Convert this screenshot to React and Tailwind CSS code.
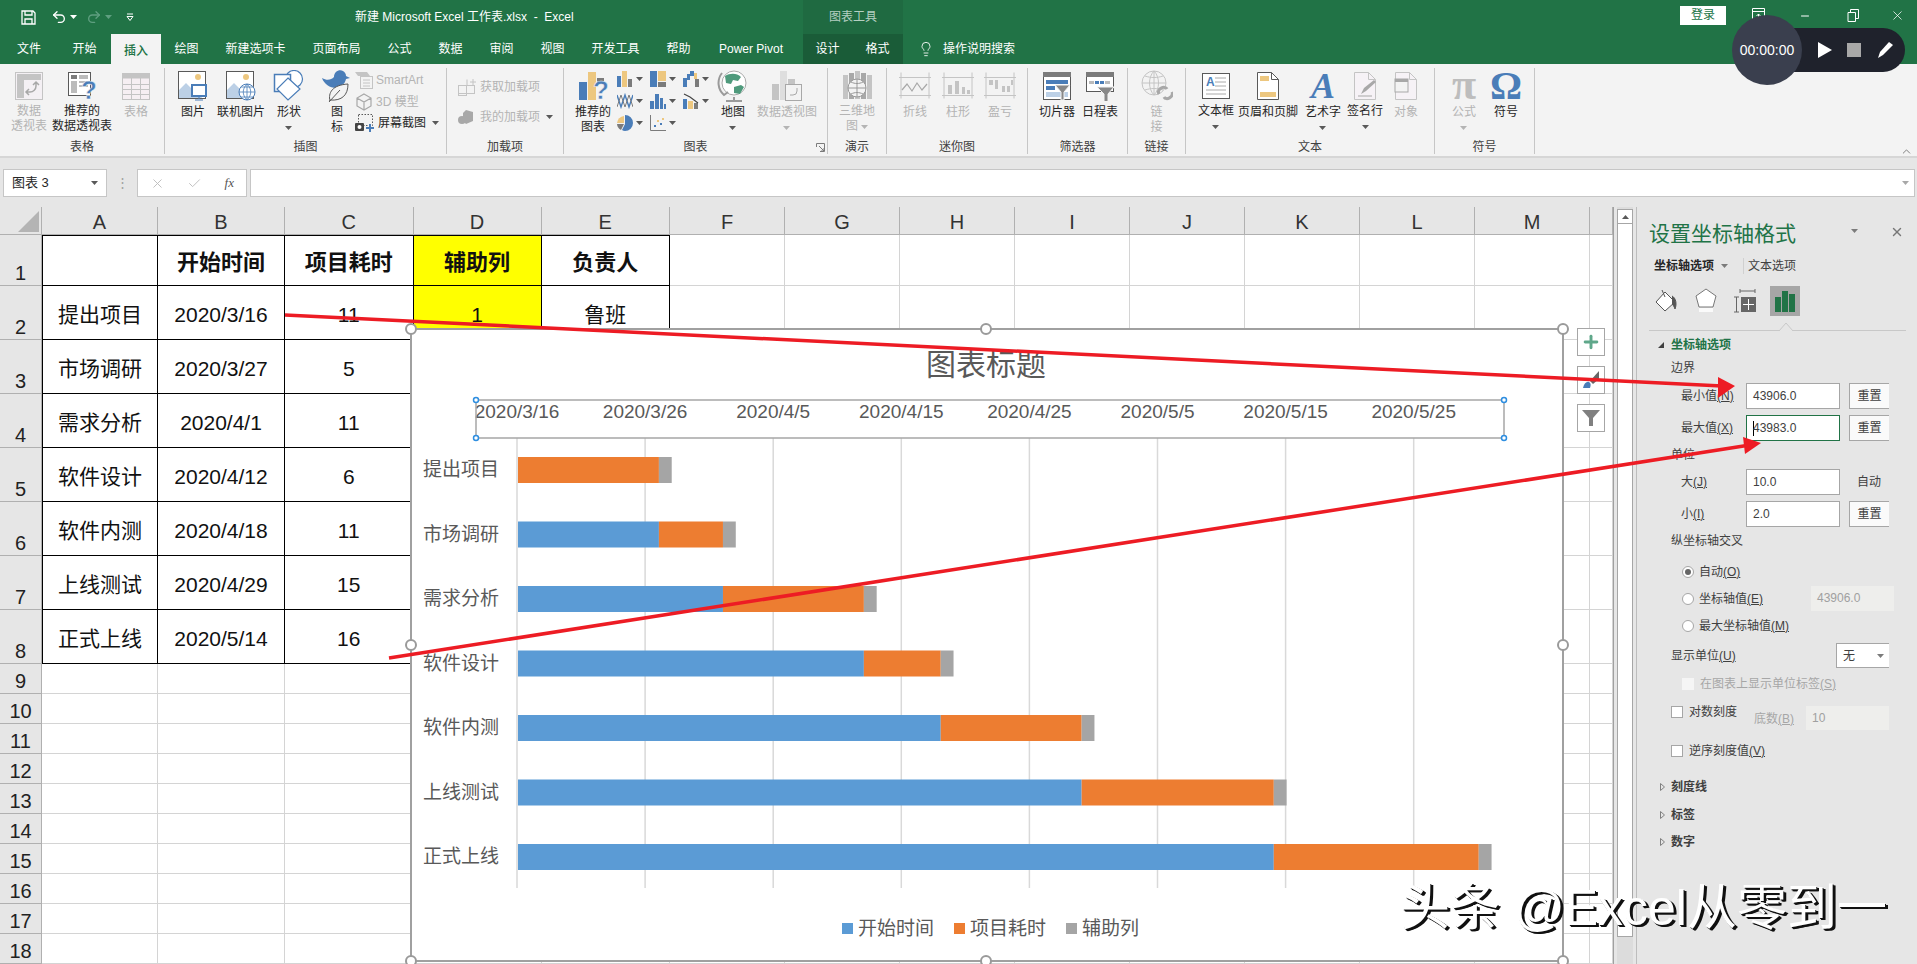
import { Undo2, Redo2, Lightbulb, X, Check, Plus, Minus, ChevronUp } from "lucide-react";

const B = "#4a7db8";
const T = "#edc77f";
const G = "#7b7b7b";
const D = "#c4c4c4";
const DD = "#a8a8a8";
const INK = "#595959";

const Ic = ({ w = 32, h = 32, children }) => (
  <svg width={w} height={h} viewBox={`0 0 ${w} ${h}`} className="block shrink-0">
    {children}
  </svg>
);

const Caret = ({ c = "#595959" }) => (
  <svg width="7" height="4" viewBox="0 0 7 4" className="block shrink-0">
    <polygon points="0,0 7,0 3.5,4" fill={c} />
  </svg>
);

const Question = ({ className }) => (
  <span className={`absolute text-[26px] leading-[26px] font-bold text-[#4a7db8] [-webkit-text-stroke:0.5px_#f3f3f3] ${className}`}>?</span>
);

/* ribbon icons */
const PivotIcon = () => (
  <Ic w={30} h={30}>
    <rect x="1.5" y="1.5" width="27" height="27" fill="#f4f0f4" stroke={D} />
    <rect x="3" y="3" width="24" height="6" fill={D} />
    <rect x="3" y="3" width="7" height="24" fill={D} />
    <path d="M22 12v3a6 6 0 0 1-6 6h-3M19 14l3-3 3 3M15 18l-3 3 3 3" fill="none" stroke={DD} strokeWidth="1.5" />
  </Ic>
);
const RecPivotIcon = () => (
  <div className="relative w-[30px] h-[30px]">
    <Ic w={30} h={30}>
      <rect x="1.5" y="1.5" width="22" height="23" fill="#fff" stroke={INK} />
      <rect x="4" y="4" width="6" height="4" fill={G} />
      <rect x="4" y="10" width="6" height="12" fill="#bbb" />
      <rect x="12" y="4" width="9" height="4" fill="#bbb" />
      <rect x="12" y="10" width="9" height="2" fill="#bbb" />
      <rect x="12" y="14" width="9" height="2" fill="#bbb" />
    </Ic>
    <Question className="left-[14px] top-[6px]" />
  </div>
);
const TableIcon = () => (
  <Ic w={30} h={30}>
    <rect x="1.5" y="2.5" width="27" height="26" fill="#f6eff3" stroke={D} />
    <rect x="1.5" y="2.5" width="27" height="5" fill={D} />
    <path d="M10.5 3v25M19.5 3v25M2 13.5h26M2 18.5h26M2 23.5h26" stroke={D} />
  </Ic>
);
const PictureIcon = ({ children }) => (
  <Ic w={32} h={32}>
    <rect x="1.5" y="1.5" width="27" height="27" fill="#fff" stroke={INK} />
    <circle cx="21" cy="7" r="3" fill={T} />
    <polygon points="2,28 2,20 9,13 15,19 18,17 25,28" fill="#bcd0e6" />
    {children}
  </Ic>
);
const ShapesIcon = () => (
  <Ic w={32} h={32}>
    <circle cx="21" cy="9" r="8.5" fill="#fff" stroke={B} strokeWidth="1.2" />
    <rect x="1.5" y="4.5" width="16" height="17" fill="#fff" stroke={B} strokeWidth="1.5" />
    <polygon points="15,8 27,19 15,30 4,19" fill="#fff" stroke={B} strokeWidth="1.2" />
  </Ic>
);
const BirdIcon = () => (
  <Ic w={32} h={32}>
    <path fill={B} d="M1 8C6 11 10 10 13 7C13 2 18 -1 22 1C24 2 25 4 25 6L29 8L25 9C24 14 20 17 15 18C9 18 3 14 1 8Z" />
    <path fill="#f3f3f3" stroke={INK} d="M9 31C7 23 11 15 27 14C27 25 21 31 9 30ZM8 32L19 20" />
  </Ic>
);
const SmartArtIcon = () => (
  <Ic w={18} h={18}>
    <polygon points="0,1 12,1 15,5 3,5" fill={D} />
    <rect x="5.5" y="5.5" width="12" height="12" fill="none" stroke={D} />
    <path d="M8 9h7M8 12h7M8 15h7" stroke={D} />
  </Ic>
);
const CubeIcon = () => (
  <Ic w={18} h={18}>
    <path d="M9 1l7 4v8l-7 4-7-4V5zM2 5l7 4 7-4M9 9v8" fill="none" stroke={DD} strokeWidth="1.2" />
  </Ic>
);
const ShotIcon = () => (
  <Ic w={20} h={20}>
    <rect x="3.5" y="1.5" width="14" height="11" fill="none" stroke={INK} strokeDasharray="1.5 1.5" />
    <rect x="0" y="10" width="9" height="8" rx="1" fill="#444" />
    <circle cx="4.5" cy="14" r="2" fill="#fff" />
    <path d="M15 11v8M11 15h8" stroke={B} strokeWidth="2" />
  </Ic>
);
const StoreIcon = () => (
  <Ic w={20} h={18}>
    <rect x="1.5" y="7.5" width="8" height="8" fill="none" stroke={D} />
    <rect x="9.5" y="7.5" width="8" height="8" fill="none" stroke={D} />
    <rect x="1.5" y="15.5" width="8" height="2" fill="none" stroke={D} />
    <rect x="9.5" y="1.5" width="1" height="6" fill={D} />
    <path d="M13 4h6M16 1v6" stroke={D} />
  </Ic>
);
const MyAddIcon = () => (
  <Ic w={20} h={18}>
    <polygon points="9,2 16,4 16,13 9,16 6,13 6,5" fill={DD} />
    <circle cx="5" cy="12" r="4" fill={DD} />
  </Ic>
);
const RecChartIcon = () => (
  <div className="relative w-[32px] h-[32px]">
    <Ic w={32} h={32}>
      <rect x="2" y="12" width="8" height="18" fill={B} />
      <rect x="11" y="2" width="8" height="28" fill={T} />
      <rect x="20" y="8" width="7" height="5" fill={G} />
    </Ic>
    <Question className="left-[16px] top-[7px]" />
  </div>
);
const Col1 = () => (
  <Ic w={16} h={16}>
    <rect x="0" y="5" width="4" height="11" fill={B} />
    <rect x="5" y="0" width="5" height="16" fill={T} />
    <rect x="11" y="8" width="4" height="8" fill={G} />
  </Ic>
);
const Tree = () => (
  <Ic w={16} h={16}>
    <rect x="0" y="0" width="7" height="16" fill={B} />
    <rect x="8" y="0" width="8" height="10" fill={T} />
    <rect x="8" y="11" width="8" height="5" fill={G} />
  </Ic>
);
const Fall = () => (
  <Ic w={16} h={16}>
    <rect x="0" y="7" width="4" height="9" fill={B} />
    <rect x="4" y="3" width="3" height="6" fill={B} />
    <rect x="7" y="0" width="4" height="5" fill={B} />
    <rect x="11" y="2" width="3" height="6" fill={T} />
    <rect x="12" y="8" width="4" height="8" fill={G} />
  </Ic>
);
const Lines = () => (
  <Ic w={16} h={16}>
    <path d="M0 2l4 12 4-12 4 12 4-12" fill="none" stroke={B} strokeWidth="1.4" />
    <path d="M0 14l4-12 4 12 4-12 4 12" fill="none" stroke={G} strokeWidth="1" />
  </Ic>
);
const Hist = () => (
  <Ic w={16} h={16}>
    <rect x="0" y="8" width="4" height="8" fill={B} />
    <rect x="5" y="1" width="4" height="15" fill={B} />
    <rect x="10" y="5" width="3" height="11" fill={B} />
    <rect x="14" y="11" width="2" height="5" fill={B} />
  </Ic>
);
const Combo = () => (
  <Ic w={16} h={16}>
    <rect x="0" y="6" width="4" height="10" fill={B} />
    <rect x="5" y="8" width="5" height="8" fill={T} />
    <rect x="11" y="10" width="4" height="6" fill={G} />
    <path d="M1 1l6 3 8 6" fill="none" stroke="#444" strokeWidth="1.2" />
  </Ic>
);
const Pie = () => (
  <Ic w={16} h={16}>
    <path d="M7 1a7.5 7.5 0 0 0-7 7h7z" fill={T} />
    <path d="M0 9a7.5 7.5 0 0 0 4 6l3-6z" fill={G} />
    <path d="M8 0a8 8 0 0 1 0 16 8 8 0 0 1-3-1l3-6z" fill={B} />
  </Ic>
);
const Scatter = () => (
  <Ic w={16} h={16}>
    <path d="M.5 0v15.5H16" fill="none" stroke={G} />
    <rect x="4" y="10" width="2" height="2" fill={B} />
    <rect x="7" y="5" width="2" height="2" fill={T} />
    <rect x="10" y="8" width="2" height="2" fill={B} />
    <rect x="12" y="3" width="2" height="2" fill={T} />
  </Ic>
);
const GlobeIcon = () => (
  <Ic w={32} h={34}>
    <circle cx="17" cy="14" r="12" fill="#fff" stroke="#aaa" />
    <path d="M8 7c5-3 12-3 16 1l-3 4-5-1-2 4-5-1zM17 18l7-2 3 2-4 7-6-1z" fill="#4f9a7c" />
    <path d="M5 4a16 16 0 0 0 2 22l4-3M17 28v3M9 32h16" fill="none" stroke="#9a9a9a" strokeWidth="2" />
  </Ic>
);
const PivotChartIcon = () => (
  <Ic w={32} h={32}>
    <rect x="1" y="14" width="7" height="16" fill={D} />
    <rect x="9" y="1" width="7" height="29" fill="#dedede" />
    <rect x="17" y="9" width="7" height="21" fill={D} />
    <rect x="14.5" y="14.5" width="16" height="16" fill="#f3f3f3" stroke={DD} />
    <path d="M26 18v3a4 4 0 0 1-4 4h-3" fill="none" stroke={DD} />
  </Ic>
);
const MapIcon = () => (
  <Ic w={32} h={30}>
    <rect x="2" y="4" width="5" height="24" fill={D} />
    <rect x="8" y="2" width="5" height="26" fill={DD} />
    <rect x="14" y="0" width="5" height="28" fill={D} />
    <rect x="20" y="2" width="5" height="26" fill={DD} />
    <rect x="26" y="4" width="5" height="24" fill={D} />
    <circle cx="16" cy="17" r="9" fill="#f3f3f3" stroke="#999" />
    <path d="M7 17h18M16 8v18M10 11c4 2 8 2 12 0M10 23c4-2 8-2 12 0" fill="none" stroke="#999" />
  </Ic>
);
const Spark = ({ children }) => (
  <Ic w={32} h={28}>
    <path d="M2 .5v26M30 .5v26M0 5.5h32M0 23.5h32" stroke={D} />
    {children}
  </Ic>
);
const SlicerIcon = () => (
  <Ic w={30} h={30}>
    <rect x="1.5" y="1.5" width="27" height="27" fill="#fff" stroke={INK} />
    <rect x="1" y="1" width="28" height="5" fill={G} />
    <rect x="4" y="9" width="22" height="4" fill={B} />
    <rect x="4" y="15" width="9" height="4" fill={B} />
    <rect x="4" y="21" width="22" height="5" fill="#bcd0e6" />
    <polygon points="13,14 28,14 22,21 22,29 19,29 19,21" fill="#888" stroke="#f3f3f3" />
  </Ic>
);
const TimelineIcon = () => (
  <Ic w={30} h={30}>
    <rect x="1.5" y="1.5" width="27" height="19" fill="#fff" stroke={INK} />
    <rect x="1" y="1" width="28" height="5" fill={G} />
    <rect x="4" y="10" width="5" height="3" fill="#bbb" />
    <rect x="10" y="10" width="4" height="3" fill={B} />
    <rect x="15" y="10" width="4" height="3" fill={B} />
    <rect x="20" y="10" width="5" height="3" fill="#bbb" />
    <polygon points="12,16 29,16 23,23 23,32 19,32 19,23" fill="#888" stroke="#f3f3f3" />
  </Ic>
);
const LinkIcon = () => (
  <Ic w={32} h={32}>
    <circle cx="13" cy="13" r="12" fill="#f3f3f3" stroke={D} />
    <path d="M1 13h24M13 1v24M4 6c6 2 12 2 18 0M4 20c6-2 12-2 18 0M13 1c-6 6-6 18 0 24M13 1c6 6 6 18 0 24" fill="none" stroke={D} />
    <path d="M18 24c-3-5 6-9 8-5M31 22c2 5-6 9-8 5" fill="none" stroke={DD} strokeWidth="3" />
  </Ic>
);
const TextBoxIcon = () => (
  <div className="relative w-[30px] h-[30px]">
    <Ic w={30} h={30}>
      <rect x="1.5" y="2.5" width="27" height="25" fill="#fff" stroke={INK} />
      <path d="M14 7h11M14 11h11M14 15h11M5 19h20M5 23h20" stroke="#aaa" />
    </Ic>
    <span className="absolute left-[5px] top-[5px] text-[12px] leading-[12px] font-bold text-[#4a7db8]">A</span>
  </div>
);
const PageIcon = ({ stroke = INK, fill = "#fff", children }) => (
  <Ic w={24} h={30}>
    <path d="M1.5 1.5h14l7 7v20h-21z" fill={fill} stroke={stroke} />
    <path d="M15.5 1.5v7h7" fill="none" stroke={stroke} />
    {children}
  </Ic>
);
const WordArtIcon = () => (
  <div className="w-[30px] h-[32px] text-center text-[36px] leading-[32px] font-bold italic text-[#4a7db8] [font-family:'Liberation_Serif',serif]">A</div>
);
const PiIcon = () => (
  <div className="w-[32px] h-[32px] text-center text-[44px] leading-[30px] font-bold text-[#bdbdbd] [font-family:'Liberation_Serif',serif]">π</div>
);
const OmegaIcon = () => (
  <div className="w-[32px] h-[32px] text-center text-[40px] leading-[32px] font-bold text-[#4a7db8] [font-family:'Liberation_Serif',serif]">Ω</div>
);

/* ribbon parts */
const Big = ({ w, icon, lines, caret, off }) => (
  <div className={`${w} shrink-0 flex flex-col items-center whitespace-nowrap`}>
    <div className="h-[32px] mt-[2px] flex items-center justify-center">{icon}</div>
    <div className={`mt-[3px] text-[12px] leading-[15px] flex flex-col items-center ${off ? "text-[#b4b4b4]" : "text-[#262626]"}`}>
      {lines.map((l, i) => (
        <span key={i} className="flex items-center gap-[3px] h-[15px]">
          {l}
          {caret === "inline" && i === lines.length - 1 && <Caret c="#b4b4b4" />}
        </span>
      ))}
      {caret === true && (
        <span className="h-[15px] flex items-center">
          <Caret c={off ? "#b4b4b4" : "#595959"} />
        </span>
      )}
    </div>
  </div>
);

const SmallRow = ({ icon, label, caret, off }) => (
  <div className={`h-[22px] flex items-center gap-[3px] text-[12px] whitespace-nowrap ${off ? "text-[#b4b4b4]" : "text-[#262626]"}`}>
    {icon}
    {label}
    {caret && <span className="ml-[3px]"><Caret /></span>}
  </div>
);

const Group = ({ w, label, children, launcher }) => (
  <div className={`${w} shrink-0 h-[86px] mt-[4px] border-r border-[#c6c6c6] flex flex-col relative`}>
    <div className="h-[66px] flex">{children}</div>
    <div className="mt-[7px] h-[13px] leading-[13px] text-center text-[12px] text-[#404040]">{label}</div>
    {launcher && (
      <svg width="9" height="9" viewBox="0 0 9 9" className="absolute right-[2px] bottom-[2px]">
        <path d="M.5 4V.5H8.5V8.5H4M3 3l5 5M5 8h3V5" fill="none" stroke="#7b7b7b" />
      </svg>
    )}
  </div>
);

const ChartCell = ({ icon }) => (
  <div className="h-[22px] w-[33px] flex items-center gap-[3px]">
    {icon}
    <Caret />
  </div>
);

const Ribbon = () => (
  <div className="relative h-[94px] bg-[#f3f3f3] border-b-2 border-[#d6d6d6] flex shrink-0">
    <Group w="w-[165px]" label="表格">
      <div className="w-[4px] shrink-0" />
      <Big w="w-[50px]" icon={<PivotIcon />} lines={["数据", "透视表"]} off />
      <Big w="w-[56px]" icon={<RecPivotIcon />} lines={["推荐的", "数据透视表"]} />
      <Big w="w-[52px]" icon={<TableIcon />} lines={["表格"]} off />
    </Group>
    <Group w="w-[282px]" label="插图">
      <Big w="w-[56px]" icon={<PictureIcon><rect x="15" y="15" width="14" height="11" fill="#fff" stroke={B} strokeWidth="2" /><path d="M22 26v3M18 30h8" stroke={B} /></PictureIcon>} lines={["图片"]} />
      <Big w="w-[40px]" icon={<PictureIcon><circle cx="22" cy="22" r="8" fill="#fff" stroke={B} /><path d="M14 22h16M22 14v16M16 17h12M16 27h12M22 14c-5 5-5 11 0 16M22 14c5 5 5 11 0 16" fill="none" stroke={B} strokeWidth=".8" /></PictureIcon>} lines={["联机图片"]} />
      <Big w="w-[56px]" icon={<ShapesIcon />} lines={["形状"]} caret />
      <Big w="w-[40px]" icon={<BirdIcon />} lines={["图", "标"]} />
      <div className="ml-[-2px] pt-[1px] flex flex-col">
        <SmallRow icon={<SmartArtIcon />} label="SmartArt" off />
        <SmallRow icon={<CubeIcon />} label="3D 模型" off />
        <SmallRow icon={<ShotIcon />} label="屏幕截图" caret />
      </div>
    </Group>
    <Group w="w-[117px]" label="加载项">
      <div className="pl-[10px] pt-[8px] flex flex-col gap-[8px]">
        <SmallRow icon={<StoreIcon />} label="获取加载项" off />
        <SmallRow icon={<MyAddIcon />} label="我的加载项" off caret />
      </div>
    </Group>
    <Group w="w-[264px]" label="图表" launcher>
      <div className="w-[5px] shrink-0" />
      <Big w="w-[48px]" icon={<RecChartIcon />} lines={["推荐的", "图表"]} />
      <div className="w-[99px] shrink-0 flex flex-wrap content-start">
        <ChartCell icon={<Col1 />} />
        <ChartCell icon={<Tree />} />
        <ChartCell icon={<Fall />} />
        <ChartCell icon={<Lines />} />
        <ChartCell icon={<Hist />} />
        <ChartCell icon={<Combo />} />
        <ChartCell icon={<Pie />} />
        <ChartCell icon={<Scatter />} />
      </div>
      <Big w="w-[34px]" icon={<GlobeIcon />} lines={["地图"]} caret />
      <Big w="w-[74px]" icon={<PivotChartIcon />} lines={["数据透视图"]} caret off />
    </Group>
    <Group w="w-[59px]" label="演示">
      <Big w="w-[58px]" icon={<MapIcon />} lines={["三维地", "图"]} caret="inline" off />
    </Group>
    <Group w="w-[141px]" label="迷你图">
      <Big w="w-[56px]" icon={<Spark><path d="M3 18l5-6 5 7 5-8 5 7 5-6" fill="none" stroke={DD} strokeWidth="1.2" /></Spark>} lines={["折线"]} off />
      <Big w="w-[30px]" icon={<Spark><path d="M6 22V13h4v9zM13 22V9h4v13zM20 22v-7h3v7zM25 22v-4h3v4z" fill={D} /></Spark>} lines={["柱形"]} off />
      <Big w="w-[54px]" icon={<Spark><path d="M5 8h4v5H5zM11 8h3v9h-3zM18 14h3v6h-3zM23 14h3v6h-3zM27 8h2v5h-2z" fill={D} /></Spark>} lines={["盈亏"]} off />
    </Group>
    <Group w="w-[100px]" label="筛选器">
      <Big w="w-[58px]" icon={<SlicerIcon />} lines={["切片器"]} />
      <Big w="w-[28px]" icon={<TimelineIcon />} lines={["日程表"]} />
    </Group>
    <Group w="w-[58px]" label="链接">
      <Big w="w-[57px]" icon={<LinkIcon />} lines={["链", "接"]} off />
    </Group>
    <Group w="w-[249px]" label="文本">
      <Big w="w-[60px]" icon={<TextBoxIcon />} lines={["文本框"]} caret />
      <Big w="w-[44px]" icon={<PageIcon><rect x="4" y="5" width="9" height="5" fill={T} /><rect x="4" y="21" width="16" height="5" fill={T} /></PageIcon>} lines={["页眉和页脚"]} />
      <Big w="w-[66px]" icon={<WordArtIcon />} lines={["艺术字"]} caret />
      <Big w="w-[18px]" icon={<PageIcon stroke={D} fill="#f6f2f6"><path d="M5 25h14" stroke={DD} /><path d="M8 23l3-6 10-8 2 2-10 9z" fill={DD} /></PageIcon>} lines={["签名行"]} caret />
      <Big w="w-[64px]" icon={<PageIcon stroke={D} fill="#f6f2f6"><rect x="1" y="8" width="13" height="13" fill="#f3f3f3" stroke={DD} /><rect x="1" y="8" width="13" height="3" fill={DD} /></PageIcon>} lines={["对象"]} off />
    </Group>
    <Group w="w-[100px]" label="符号">
      <Big w="w-[58px]" icon={<PiIcon />} lines={["公式"]} caret off />
      <Big w="w-[26px]" icon={<OmegaIcon />} lines={["符号"]} />
    </Group>
    <ChevronUp size={13} strokeWidth={1.2} className="absolute left-[1900px] top-[81px] text-[#444]" />
  </div>
);

const tabs = [
  ["文件", "w-[58px]"],
  ["开始", "w-[53px]"],
  ["插入", "w-[50px]"],
  ["绘图", "w-[51px]"],
  ["新建选项卡", "w-[87px]"],
  ["页面布局", "w-[75px]"],
  ["公式", "w-[51px]"],
  ["数据", "w-[51px]"],
  ["审阅", "w-[51px]"],
  ["视图", "w-[51px]"],
  ["开发工具", "w-[75px]"],
  ["帮助", "w-[51px]"],
  ["Power Pivot", "w-[94px]"],
];

const TitleBar = () => (
  <div className="h-[64px] bg-[#217346] text-white text-[12px] shrink-0 flex flex-col relative">
    <div className="h-[34px] flex items-center">
      <div className="w-[355px] shrink-0 flex items-center pl-[21px]">
        <svg width="15" height="15" viewBox="0 0 15 15" className="block">
          <path d="M1 1h11l2 2v11H1zM4 1v4h7V1M4 14V9h7v5" fill="none" stroke="#fff" strokeWidth="1.3" />
        </svg>
        <Undo2 size={16} strokeWidth={2} className="ml-[15px]" />
        <span className="ml-[3px]"><Caret c="#fff" /></span>
        <Redo2 size={16} strokeWidth={2} className="ml-[9px] text-[#5f9f80]" />
        <span className="ml-[3px]"><Caret c="#5f9f80" /></span>
        <svg width="8" height="8" viewBox="0 0 8 8" className="block ml-[14px]">
          <path d="M1 1h6M1 3.5h6L4 7.5z" fill="none" stroke="#fff" />
        </svg>
      </div>
      <div className="w-[448px] shrink-0 whitespace-pre">新建 Microsoft Excel 工作表.xlsx  -  Excel</div>
      <div className="w-[100px] h-[34px] shrink-0 bg-[#1f6a41] text-center leading-[34px] text-[#b5cfc1]">图表工具</div>
      <div className="ml-[777px] w-[46px] h-[19px] bg-white text-[#217346] text-center leading-[19px] mt-[-4px]">登录</div>
      <svg width="13" height="13" viewBox="0 0 13 13" className="block ml-[26px] mt-[-6px]">
        <path d="M.5 .5h12v12H.5zM.5 3.5h12M6.5 11V6M4.5 8l2-2 2 2" fill="none" stroke="#fff" />
      </svg>
      <Minus size={12} className="absolute left-[1799px] top-[10px]" />
      <svg width="13" height="13" viewBox="0 0 13 13" className="absolute left-[1847px] top-[9px]">
        <path d="M3.5 3V.5h8v9h-3M1 3.5h7.5v9H1z" fill="none" stroke="#fff" />
      </svg>
      <X size={15} strokeWidth={1.2} className="absolute left-[1890px] top-[8px]" />
    </div>
    <div className="h-[30px] flex items-center">
      {tabs.map(([t, w]) => (
        <div
          key={t}
          className={`${w} h-[30px] shrink-0 text-center whitespace-nowrap ${t === "插入" ? "bg-[#f3f3f3] text-[#217346] font-medium leading-[34px]" : "leading-[30px]"}`}
        >
          {t}
        </div>
      ))}
      <div className="w-[5px] shrink-0" />
      <div className="w-[100px] h-[30px] shrink-0 bg-[#1a5c38] flex">
        <div className="w-[49px] text-center leading-[30px]">设计</div>
        <div className="w-[51px] text-center leading-[30px]">格式</div>
      </div>
      <Lightbulb size={16} strokeWidth={1.3} className="ml-[15px]" />
      <div className="ml-[9px]">操作说明搜索</div>
    </div>
  </div>
);

const FormulaBar = () => (
  <div className="h-[49px] bg-[#e6e6e6] shrink-0 flex items-start pt-[11px] pl-[3px]">
    <div className="w-[104px] h-[28px] bg-white border border-[#c6c6c6] flex items-center justify-between px-[8px] text-[13px] text-[#262626]">
      图表 3
      <Caret />
    </div>
    <div className="w-[30px] h-[28px] flex items-center justify-center text-[#a0a0a0] text-[13px]">⋮</div>
    <div className="w-[110px] h-[28px] bg-white border border-[#c6c6c6] flex items-center justify-between pl-[12px] pr-[12px] text-[#bdbdbd]">
      <X size={15} strokeWidth={1.5} />
      <Check size={15} strokeWidth={1.5} />
      <span className="text-[13px] italic text-[#555] [font-family:'Liberation_Serif',serif]">fx</span>
    </div>
    <div className="ml-[3px] w-[1665px] h-[28px] bg-white border border-[#c6c6c6] flex items-center justify-end pr-[5px]">
      <Caret c="#a8a8a8" />
    </div>
  </div>
);

const sheetCols = ["A", "B", "C", "D", "E", "F", "G", "H", "I", "J", "K", "L", "M", ""];
const tableRows = [
  ["", "开始时间", "项目耗时", "辅助列", "负责人"],
  ["提出项目", "2020/3/16", "11", "1", "鲁班"],
  ["市场调研", "2020/3/27", "5", "", ""],
  ["需求分析", "2020/4/1", "11", "", ""],
  ["软件设计", "2020/4/12", "6", "", ""],
  ["软件内测", "2020/4/18", "11", "", ""],
  ["上线测试", "2020/4/29", "15", "", ""],
  ["正式上线", "2020/5/14", "16", "", ""],
];
const rowNums = Array.from({ length: 18 }, (_, i) => i + 1);

const Row = ({ n }) => {
  const data = tableRows[n - 1];
  return (
    <>
      <div className="bg-[#e6e6e6] border-r border-b border-[#b0b0b0] flex items-end justify-center text-[20px] leading-[24px] text-[#222]">{n}</div>
      {sheetCols.map((_, i) => {
        const inTable = data && i < 5;
        const yellow = i === 3 && n <= 2;
        return (
          <div
            key={i}
            className={`flex items-center justify-center pt-[4px] text-[#111] ${inTable ? "border-r border-b border-black" : "border-r border-b border-[#d4d4d4]"} ${inTable && n === 1 ? "border-t font-bold text-[22px]" : "text-[21px]"} ${inTable && i === 0 ? "border-l" : ""} ${yellow ? "bg-[#ffff00]" : ""}`}
          >
            {inTable ? data[i] : ""}
          </div>
        );
      })}
    </>
  );
};

const Sheet = () => (
  <div className="w-[1613px] h-[757px] shrink-0 grid grid-cols-[42px_116px_127px_128.5px_128px_128.5px_repeat(8,115px)_23px] grid-rows-[28px_51px_repeat(7,54px)_repeat(10,30px)] bg-white border-r border-[#a0a0a0] box-content">
    <div className="bg-[#e6e6e6] border-r border-b border-[#b0b0b0] relative">
      <svg width="22" height="22" viewBox="0 0 22 22" className="absolute left-[18px] top-[4px]">
        <polygon points="21,0 21,21 0,21" fill="#b4b4b4" />
      </svg>
    </div>
    {sheetCols.map((c, i) => (
      <div key={i} className="bg-[#e6e6e6] border-r border-b border-[#b0b0b0] text-center text-[20px] leading-[30px] text-[#333]">
        {c}
      </div>
    ))}
    {rowNums.map((n) => (
      <Row key={n} n={n} />
    ))}
  </div>
);

/* chart */
const DAY = 12.81;
const tickDates = ["2020/3/16", "2020/3/26", "2020/4/5", "2020/4/15", "2020/4/25", "2020/5/5", "2020/5/15", "2020/5/25"];
const bars = [
  ["提出项目", 0, 11],
  ["市场调研", 11, 5],
  ["需求分析", 16, 11],
  ["软件设计", 27, 6],
  ["软件内测", 33, 11],
  ["上线测试", 44, 15],
  ["正式上线", 59, 16],
];
const legend = [
  [842, "#5b9bd5", "开始时间"],
  [954, "#ed7d31", "项目耗时"],
  [1066, "#a5a5a5", "辅助列"],
];

const Handle = ({ x, y }) => <circle cx={x} cy={y} r="5" fill="#fff" stroke="#9a9a9a" strokeWidth="2" />;
const Dot = ({ x, y }) => <circle cx={x} cy={y} r="2.5" fill="#fff" stroke="#2e8ee0" strokeWidth="1.5" />;

const Chart = () => (
  <svg
    width="1917"
    height="964"
    viewBox="0 0 1917 964"
    className="absolute left-0 top-0 [font-family:'Liberation_Sans','Noto_Sans_CJK_SC',sans-serif]"
  >
    <rect x="411" y="329" width="1152" height="632" fill="#fff" stroke="#a0a0a0" strokeWidth="2" />
    <text x="986" y="375" textAnchor="middle" fontSize="30" fill="#595959">图表标题</text>
    {tickDates.map((d, i) => (
      <g key={d}>
        <line x1={517 + 128.1 * i} x2={517 + 128.1 * i} y1="438" y2="888" stroke="#d9d9d9" strokeWidth="1.5" />
        <text x={517 + 128.1 * i} y="418" textAnchor="middle" fontSize="19" fill="#595959">{d}</text>
      </g>
    ))}
    <rect x="476" y="400" width="1028" height="38" fill="none" stroke="#a6a6a6" strokeWidth="1.5" />
    <Dot x={476} y={400} />
    <Dot x={476} y={438} />
    <Dot x={1504} y={400} />
    <Dot x={1504} y={438} />
    {bars.map(([name, start, dur], i) => {
      const y = 457 + 64.5 * i;
      return (
        <g key={name}>
          <text x="423" y={y + 19} fontSize="19" fill="#595959">{name}</text>
          <rect x="518" y={y} width={start * DAY} height="26" fill="#5b9bd5" />
          <rect x={518 + start * DAY} y={y} width={dur * DAY} height="26" fill="#ed7d31" />
          <rect x={518 + (start + dur) * DAY} y={y} width={DAY} height="26" fill="#a5a5a5" />
        </g>
      );
    })}
    {legend.map(([x, c, t]) => (
      <g key={t}>
        <rect x={x} y="923" width="11" height="11" fill={c} />
        <text x={x + 16} y="935" fontSize="19" fill="#595959">{t}</text>
      </g>
    ))}
    <Handle x={411} y={329} />
    <Handle x={986} y={329} />
    <Handle x={1563} y={329} />
    <Handle x={411} y={645} />
    <Handle x={1563} y={645} />
    <Handle x={411} y={961} />
    <Handle x={986} y={961} />
    <Handle x={1563} y={961} />
  </svg>
);

const Arrows = () => (
  <svg width="1917" height="964" viewBox="0 0 1917 964" className="absolute left-0 top-0 pointer-events-none">
    <line x1="285" y1="315" x2="1722" y2="386" stroke="#ed1c24" strokeWidth="3.5" />
    <polygon points="1718,377 1735,386 1718,398" fill="#ed1c24" />
    <line x1="389" y1="658" x2="1750" y2="445" stroke="#ed1c24" strokeWidth="3.5" />
    <polygon points="1743,437 1761,443 1745,454" fill="#ed1c24" />
  </svg>
);

const SideBtn = ({ className, children }) => (
  <div className={`absolute left-[1577px] w-[28px] h-[28px] bg-white border border-[#a6a6a6] flex items-center justify-center ${className}`}>{children}</div>
);

/* format pane */
const Mn = ({ t, k }) => (
  <span>
    {t}
    <span className="underline">({k})</span>
  </span>
);

const Field = ({ mt, label, value, focus, reset, auto }) => (
  <div className={`${mt} h-[26px] pl-[32px] flex items-center`}>
    <div className="w-[65px] shrink-0">{label}</div>
    <div className={`w-[94px] h-[26px] shrink-0 bg-white border flex items-center pl-[6px] ${focus ? "border-[#217346]" : "border-[#a6a6a6]"}`}>
      {focus && <span className="w-px h-[15px] bg-black mr-[-1px]" />}
      {value}
    </div>
    {reset && <div className="ml-[9px] w-[40px] h-[26px] bg-[#fafafa] border-l border-t border-b border-[#a6a6a6] text-center leading-[24px]">重置</div>}
    {auto && <div className="ml-[17px]">自动</div>}
  </div>
);

const Radio = ({ on }) => (
  <span className="w-[12px] h-[12px] rounded-full bg-white border border-[#a6a6a6] flex items-center justify-center shrink-0">
    {on && <span className="w-[6px] h-[6px] rounded-full bg-[#666]" />}
  </span>
);

const RadioRow = ({ mt, on, children, h = "h-[16px]" }) => (
  <div className={`${mt} ${h} pl-[33px] flex items-center gap-[5px]`}>
    <Radio on={on} />
    {children}
  </div>
);

const Check2 = ({ off }) => (
  <span className={`w-[12px] h-[12px] shrink-0 ${off ? "bg-[#f5f5f5]" : "bg-white border border-[#a6a6a6]"}`} />
);

const Collapsed = ({ mt, children }) => (
  <div className={`${mt} h-[16px] pl-[11px] flex items-center gap-[6px] font-bold text-[#404040]`}>
    <svg width="5" height="8" viewBox="0 0 5 8" className="block"><polygon points=".5,.5 4.5,4 .5,7.5" fill="none" stroke="#808080" /></svg>
    {children}
  </div>
);

const Pane = () => (
  <div className="flex-1 h-[757px] bg-[#e6e6e6] border-l border-[#bdbdbd] ml-[3px] pl-[12px] text-[12px] leading-[16px] text-[#404040] relative">
    <div className="mt-[14px] h-[26px] text-[21px] leading-[26px] text-[#217346]">设置坐标轴格式</div>
    <span className="absolute left-[214px] top-[22px]"><Caret c="#7b7b7b" /></span>
    <X size={14} strokeWidth={2.4} className="absolute left-[253px] top-[18px] text-[#777]" />
    <div className="mt-[11px] h-[16px] pl-[5px] flex items-center">
      <span className="font-bold text-[#262626]">坐标轴选项</span>
      <span className="ml-[7px]"><Caret c="#7b7b7b" /></span>
      <span className="ml-[15px] h-[16px] border-l border-[#d0d0d0]" />
      <span className="ml-[4px]">文本选项</span>
    </div>
    <div className="mt-[12px] h-[30px] flex items-center">
      <svg width="24" height="24" viewBox="0 0 24 24" className="block ml-[5px]">
        <polygon points="11,3 21,13 11,22 2,13" fill="#fff" stroke="#555" />
        <path d="M8 1l3 7M18 7c4 2 5 8 3 13-1-3-2-4-3-5" fill="#555" stroke="#555" />
      </svg>
      <svg width="22" height="26" viewBox="0 0 22 26" className="block ml-[17px]">
        <polygon points="11,1 21,8 18,19 4,19 1,8" fill="#fff" stroke="#777" />
        <path d="M4 22h14" stroke="#fafafa" strokeWidth="4" />
      </svg>
      <svg width="22" height="24" viewBox="0 0 22 24" className="block ml-[17px]">
        <path d="M6 2h15M6 0v4M21 0v4M0 8h5M0 23h5M2.5 8v15" fill="none" stroke="#666" />
        <rect x="7" y="8" width="15" height="15" fill="#666" />
        <path d="M14.5 10v11M9 15.5h11" stroke="#fff" />
      </svg>
      <div className="ml-[14px] w-[30px] h-[30px] bg-[#a6a6a6] flex items-end justify-center gap-[1px] pb-[4px]">
        <span className="w-[6px] h-[15px] bg-[#217346]" />
        <span className="w-[6px] h-[21px] bg-[#217346]" />
        <span className="w-[6px] h-[18px] bg-[#217346]" />
      </div>
    </div>
    <div className="mt-[14px] relative w-[257px] border-t border-[#c8c8c8]">
      <svg width="14" height="8" viewBox="0 0 14 8" className="absolute left-[130px] top-[-8px]">
        <polygon points="0,8 7,0 14,8" fill="#e6e6e6" />
        <path d="M0 8l7-8 7 8" fill="none" stroke="#c8c8c8" />
      </svg>
    </div>
    <div className="mt-[6px] h-[16px] pl-[8px] flex items-center gap-[6px] font-bold text-[#217346]">
      <svg width="8" height="8" viewBox="0 0 8 8" className="block"><polygon points="7,1 7,7 1,7" fill="#404040" /></svg>
      坐标轴选项
    </div>
    <div className="mt-[7px] pl-[22px]">边界</div>
    <Field mt="mt-[7px]" label={<Mn t="最小值" k="N" />} value="43906.0" reset />
    <Field mt="mt-[6px]" label={<Mn t="最大值" k="X" />} value="43983.0" focus reset />
    <div className="mt-[6px] pl-[22px]">单位</div>
    <Field mt="mt-[6px]" label={<Mn t="大" k="J" />} value="10.0" auto />
    <Field mt="mt-[6px]" label={<Mn t="小" k="I" />} value="2.0" reset />
    <div className="mt-[6px] pl-[22px]">纵坐标轴交叉</div>
    <RadioRow mt="mt-[15px]" on><Mn t="自动" k="O" /></RadioRow>
    <RadioRow mt="mt-[6px]" h="h-[25px]">
      <span className="w-[107px] shrink-0"><Mn t="坐标轴值" k="E" /></span>
      <div className="w-[83px] h-[25px] bg-[#eeeeec] pl-[6px] leading-[25px] text-[#a0a0a0]">43906.0</div>
    </RadioRow>
    <RadioRow mt="mt-[7px]"><Mn t="最大坐标轴值" k="M" /></RadioRow>
    <div className="mt-[9px] h-[25px] pl-[22px] flex items-center">
      <span className="w-[165px] shrink-0"><Mn t="显示单位" k="U" /></span>
      <div className="w-[53px] h-[25px] bg-white border-l border-t border-b border-[#a6a6a6] flex items-center justify-between pl-[6px] pr-[5px]">
        无
        <Caret c="#7b7b7b" />
      </div>
    </div>
    <div className="mt-[8px] h-[16px] pl-[33px] flex items-center gap-[6px] text-[#a6a6a6]">
      <Check2 off />
      <Mn t="在图表上显示单位标签" k="S" />
    </div>
    <div className="mt-[14px] h-[24px] pl-[22px] flex items-start">
      <Check2 />
      <span className="ml-[6px] w-[65px] shrink-0 mt-[-2px]">对数刻度</span>
      <span className="mt-[5px] w-[52px] shrink-0 text-[#a6a6a6]"><Mn t="底数" k="B" /></span>
      <div className="w-[83px] h-[24px] bg-[#eeeeec] pl-[6px] leading-[24px] text-[#a0a0a0]">10</div>
    </div>
    <div className="mt-[13px] h-[16px] pl-[22px] flex items-center gap-[6px]">
      <Check2 />
      <Mn t="逆序刻度值" k="V" />
    </div>
    <Collapsed mt="mt-[20px]">刻度线</Collapsed>
    <Collapsed mt="mt-[12px]">标签</Collapsed>
    <Collapsed mt="mt-[11px]">数字</Collapsed>
  </div>
);

const Scrollbar = () => (
  <div className="ml-[3px] w-[16px] h-[757px] shrink-0 bg-[#dcdcdc] flex flex-col pt-[2px]">
    <div className="h-[15px] bg-white border border-[#a6a6a6] flex items-center justify-center">
      <svg width="7" height="4" viewBox="0 0 7 4" className="block"><polygon points="0,4 7,4 3.5,0" fill="#595959" /></svg>
    </div>
    <div className="h-[713px] bg-white border-x border-b border-[#a6a6a6]" />
  </div>
);

export default function App() {
  return (
    <div className="relative w-[1917px] h-[964px] overflow-hidden flex flex-col bg-[#e6e6e6] [font-family:'Liberation_Sans','Noto_Sans_CJK_SC',sans-serif]">
      <TitleBar />
      <Ribbon />
      <FormulaBar />
      <div className="flex">
        <Sheet />
        <Scrollbar />
        <Pane />
      </div>

      <Chart />

      <SideBtn className="top-[328px]">
        <Plus size={20} strokeWidth={3.5} className="text-[#5fa78a]" />
      </SideBtn>
      <SideBtn className="top-[366px]">
        <svg width="18" height="18" viewBox="0 0 18 18" className="block">
          <polygon points="17,0 17,8 11,13 8,10" fill="#666" />
          <path d="M1 17c1-5 4-7 6-6s2 3 1 6z" fill={B} />
        </svg>
      </SideBtn>
      <SideBtn className="top-[404px]">
        <svg width="20" height="18" viewBox="0 0 20 18" className="block">
          <polygon points="1,1 19,1 12,9 12,17 8,17 8,9" fill="#808080" />
        </svg>
      </SideBtn>

      <Arrows />

      {/* recorder widget */}
      <div className="absolute left-[1760px] top-[28px] w-[145px] h-[44px] bg-[#1f222c] rounded-full flex items-center pl-[58px]">
        <svg width="14" height="16" viewBox="0 0 14 16" className="block">
          <polygon points="0,0 14,8 0,16" fill="#fff" />
        </svg>
        <span className="ml-[15px] w-[14px] h-[14px] bg-[#a8a8a8]" />
        <svg width="16" height="16" viewBox="0 0 16 16" className="block ml-[16px]">
          <polygon points="12,0 16,3 6,13 1,16 3,10" fill="#fff" />
        </svg>
      </div>
      <div className="absolute left-[1732px] top-[15px] w-[70px] h-[70px] rounded-full bg-[#3a3f4e] flex items-center justify-center text-[14px] text-white">
        00:00:00
      </div>

      {/* watermark */}
      <div className="absolute left-[1400px] top-[878px] text-[50px] leading-[60px] whitespace-pre text-white [text-shadow:1px_1px_0_#111,2px_2px_0_#111,3px_2px_0_#111]">
        头条 @Excel从零到一
      </div>
    </div>
  );
}
